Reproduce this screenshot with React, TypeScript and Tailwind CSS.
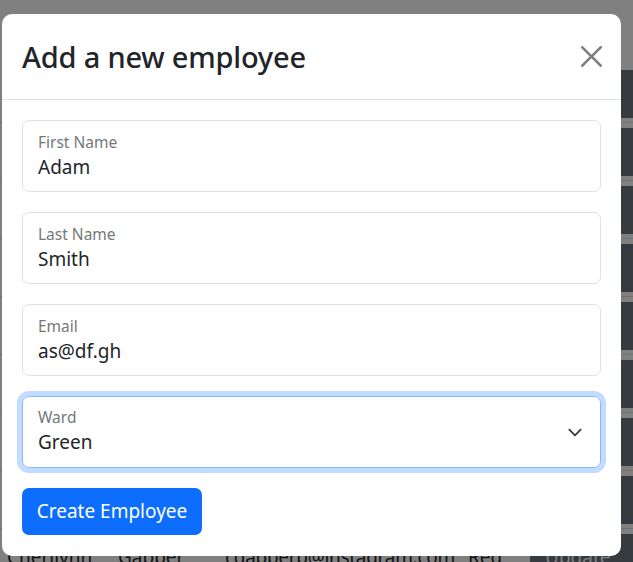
const rows = Array.from({ length: 9 });

const fields = [
  { label: "First Name", value: "Adam" },
  { label: "Last Name", value: "Smith" },
  { label: "Email", value: "as@df.gh" },
];

function Chevron() {
  return (
    <svg width="20" height="15" viewBox="0 0 16 16" fill="none" className="shrink-0">
      <path d="m2 5 6 6 6-6" stroke="#343a40" strokeWidth="2" strokeLinecap="round" strokeLinejoin="round" />
    </svg>
  );
}

function CloseIcon() {
  return (
    <svg width="21" height="21" viewBox="0 0 16 16" fill="#000" className="opacity-50">
      <path d="M.293.293a1 1 0 0 1 1.414 0L8 6.586 14.293.293a1 1 0 1 1 1.414 1.414L9.414 8l6.293 6.293a1 1 0 0 1-1.414 1.414L8 9.414l-6.293 6.293a1 1 0 0 1-1.414-1.414L6.586 8 .293 1.707a1 1 0 0 1 0-1.414" />
    </svg>
  );
}

export default function App() {
  return (
    <div
      className="relative h-[562px] w-[633px] overflow-hidden bg-[#808080]"
      style={{ fontFamily: '"Noto Sans", "Open Sans", sans-serif' }}
    >
      {/* table behind the backdrop */}
      <div className="flex flex-col pt-[65px]">
        {rows.map((_, i) => (
          <div key={i} className="flex h-[58px] shrink-0 items-center whitespace-nowrap border-b border-[#6f7173] text-[19px] text-[#101214]">
            {i === rows.length - 1 ? (
              <>
                <span className="w-[118px] shrink-0 pl-[7px]">Cherilynn</span>
                <span className="w-[107px] shrink-0">Gabber</span>
                <span className="w-[243px] shrink-0 tracking-[-0.3px]">cgabberb@instagram.com</span>
                <span className="w-[62px] shrink-0">Red</span>
              </>
            ) : (
              <span className="w-[530px] shrink-0" />
            )}
            <div className="flex h-[48px] w-[110px] shrink-0 items-center rounded-[7px] bg-[#363b3f] pl-[15px] text-[#808080]">
              Update
            </div>
          </div>
        ))}
      </div>

      {/* modal */}
      <div className="absolute left-[2px] top-[14px] w-[619px] rounded-[10px] bg-white text-[#212529]">
        <div className="flex h-[86px] items-center justify-between border-b border-[#dee2e6] pl-[20px] pr-[19px]">
          <h2 className="text-[29px] leading-[40px] font-medium tracking-[-0.2px]">Add a new employee</h2>
          <CloseIcon />
        </div>
        <div className="flex flex-col gap-[20px] px-[20px] pt-[20px] pb-[21px]">
          {fields.map((f) => (
            <div key={f.label} className="flex h-[72px] flex-col rounded-[7px] border border-[#dee2e6] px-[15px] pt-[10px]">
              <span className="text-[15.5px] leading-[22px] text-[#75787a]">{f.label}</span>
              <span className="text-[19px] leading-[28px]">{f.value}</span>
            </div>
          ))}
          <div className="flex h-[72px] items-center rounded-[7px] border border-[#86b7fe] pl-[15px] pr-[15px] shadow-[0_0_0_5px_#c3dbfe]">
            <div className="flex flex-1 flex-col pb-[2px]">
              <span className="text-[15.5px] leading-[22px] text-[#75787a]">Ward</span>
              <span className="text-[19px] leading-[28px]">Green</span>
            </div>
            <Chevron />
          </div>
          <button className="h-[47px] w-[180px] rounded-[7px] bg-[#0d6efd] text-[19px] text-white">
            Create Employee
          </button>
        </div>
      </div>
    </div>
  );
}
